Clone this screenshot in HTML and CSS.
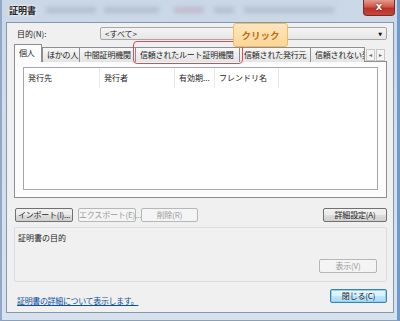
FILE: index.html
```html
<!DOCTYPE html>
<html lang="ja">
<head>
<meta charset="utf-8">
<link rel="stylesheet" href="styles.css">
</head>
<body>
<div class="win">
  <div class="titlebar">
    <span class="title">証明書</span>
    <div class="blur" aria-hidden="true">
      <span class="b1"></span><span class="b2"></span><span class="b3"></span><span class="b4"></span><span class="b5"></span>
    </div>
    <div class="close">x</div>
  </div>
  <div class="client">
    <div class="row-purpose">
      <span class="lbl">目的(N):</span>
      <div class="combo"><span>&lt;すべて&gt;</span><span class="arrow">▼</span></div>
    </div>
    <div class="tabs">
      <div class="tab sel t1">個人</div>
      <div class="tab t2">ほかの人</div>
      <div class="tab t3">中間証明機関</div>
      <div class="tab t4">信頼されたルート証明機関</div>
      <div class="tab t5">信頼された発行元</div>
      <div class="tab t6">信頼されない発</div>
      <div class="tabscroll"><span>◂</span><span>▸</span></div>
    </div>
    <div class="panel">
      <div class="list">
        <div class="lhead">
          <div class="col c1">発行先</div>
          <div class="col c2">発行者</div>
          <div class="col c3">有効期...</div>
          <div class="col c4">フレンドリ名</div>
        </div>
      </div>
    </div>
    <div class="btnrow">
      <button class="btn w58">インポート(I)...</button>
      <button class="btn w58 dis">エクスポート(E)...</button>
      <button class="btn w57 dis">削除(R)</button>
      <span class="spacer"></span>
      <button class="btn w64">詳細設定(A)</button>
    </div>
    <div class="group">
      <div class="glabel">証明書の目的</div>
      <div class="gfoot"><button class="btn w58 dis">表示(V)</button></div>
    </div>
    <div class="bottom">
      <a class="link" href="#">証明書の詳細について表示します。</a>
      <button class="btn w57 def">閉じる(C)</button>
    </div>
    <div class="hilite"></div>
    <div class="tip">クリック</div>
  </div>
</div>
</body>
</html>
```
FILE: styles.css
```css
* { box-sizing: border-box; }
html, body { margin: 0; padding: 0; }
body {
  width: 400px; height: 321px; overflow: hidden;
  font-family: "Noto Sans CJK JP", "Noto Sans", sans-serif;
  font-size: 8px; color: #1b1b1b;
}
.win {
  width: 400px; height: 321px;
  display: flex; flex-direction: column;
  padding: 0 3px 7px 4px;
  background: linear-gradient(180deg, #c9d7e6 0%, #d3dee9 40%, #d8e2ec 100%);
  border-left: 2px solid #8ea9cc;
  border-right: 3px solid #6f9ad0;
  border-bottom: 1px solid #8a9fb8;
}
.titlebar {
  height: 22px; position: relative;
  display: flex; align-items: center;
}
.title {
  font-size: 9px; font-weight: bold; color: #222;
  padding-left: 3px; margin-top: -2px;
  text-shadow: 0 0 3px #fff, 0 0 2px #fff;
}
.blur { position: absolute; left: 40px; top: 4px; width: 290px; height: 12px; filter: blur(2px); }
.blur span { position: absolute; top: 3px; height: 6px; background: #9aa6b4; opacity: .45; }
.b1 { left: 0; width: 50px; }
.b2 { left: 58px; width: 55px; }
.b3 { left: 128px; width: 30px; background: #b06080 !important; opacity: .25 !important; }
.b4 { left: 168px; width: 20px; }
.b5 { left: 198px; width: 90px; }
.close {
  position: absolute; right: -1px; top: 0; width: 32px; height: 16px;
  background: linear-gradient(180deg, #e49a8e 0%, #cd5a4a 45%, #b8322a 55%, #c6463a 100%);
  border: 1px solid #7d2a24; border-top: none;
  border-radius: 0 0 4px 4px;
  color: #fff; font-family: "DejaVu Sans", sans-serif; font-weight: bold;
  font-size: 10px; line-height: 13px; text-align: center;
  text-shadow: 0 0 2px #600;
}
.client {
  flex: 1; position: relative;
  background: #f0f0f0;
  border: 1px solid #8497b0;
  padding: 4px 6px 0 7px;
  display: flex; flex-direction: column;
}
.row-purpose { display: flex; align-items: center; height: 13px; }
.lbl { width: 86px; padding-left: 3px; }
.combo {
  flex: 1; height: 13px; display: flex; align-items: center; justify-content: space-between;
  border: 1px solid #a7a7a7; border-radius: 2px;
  background: linear-gradient(180deg, #f4f4f4, #e6e6e6);
  padding: 0 4px 0 4px;
}
.arrow { font-size: 5px; color: #111; font-family: "DejaVu Sans", sans-serif; }
.tabs { display: flex; align-items: flex-end; height: 18px; margin-top: 4px; padding-left: 1px; position: relative; z-index: 1; }
.tab {
  height: 15px; border: 1px solid #8c8e94; border-bottom: none; margin-right: -1px;
  background: linear-gradient(180deg, #f7f7f7, #e4e4e4);
  padding: 0 4px; line-height: 13px; white-space: nowrap; overflow: hidden;
  letter-spacing: -0.2px;
}
.tab.sel { height: 18px; background: #fcfcfc; margin-left: -1px; margin-right: 0; line-height: 15px; }
.t1 { width: 28px; }
.t2 { width: 38px; }
.t3 { width: 57px; }
.t4 { width: 105px; }
.t5 { width: 72px; }
.t6 { width: 55px; padding-right: 0; }
.tabscroll { display: flex; height: 15px; align-items: center; gap: 1px; padding-left: 2px; }
.tabscroll span {
  width: 9px; height: 12px; border: 1px solid #c8c8c8; background: #f4f4f4;
  font-size: 6px; line-height: 10px; text-align: center; color: #666; font-family: "DejaVu Sans", sans-serif;
}
.panel {
  height: 137px; border: 1px solid #8c8e94; margin-top: -1px;
  background: #fcfcfc; padding: 5px 8px 7px 8px;
}
.list { height: 100%; background: #fff; border: 1px solid #a3a7ae; }
.lhead { display: flex; height: 20px; align-items: center; }
.col { padding-left: 4px; height: 20px; line-height: 20px; border-right: 1px solid #e6e8eb; white-space: nowrap; overflow: hidden; }
.c1 { width: 76px; }
.c2 { width: 75px; }
.c3 { width: 40px; }
.c4 { width: 64px; }
.btnrow { display: flex; margin-top: 10px; gap: 5px; padding-left: 1px; }
.spacer { flex: 1; }
.btn {
  font: inherit; color: #1b1b1b; height: 14px; padding: 0; line-height: 12px;
  border: 1px solid #707070; border-radius: 2px;
  background: linear-gradient(180deg, #f2f2f2 0%, #ebebeb 50%, #dddddd 51%, #cfcfcf 100%);
  white-space: nowrap; letter-spacing: -0.2px;
}
.btn.dis { border-color: #b4b8bb; background: #f4f4f4; color: #9a9a9a; }
.btn.def { border-color: #3c7fb1; background: linear-gradient(180deg, #eaf6fd 0%, #d9f0fc 50%, #bee6fd 51%, #a7d9f5 100%); box-shadow: inset 0 0 0 1px #8fd3f7; }
.w58 { width: 58px; }
.w57 { width: 57px; }
.w64 { width: 64px; }
.group {
  margin-top: 5px; height: 55px; border: 1px solid #d8dde2; border-radius: 2px;
  display: flex; flex-direction: column; justify-content: space-between;
  padding: 4px 9px 8px 3px;
}
.gfoot { display: flex; justify-content: flex-end; }
.bottom { display: flex; align-items: center; justify-content: space-between; margin-top: 3px; padding-left: 3px; }
.link { color: #0b4ea2; text-decoration: underline; letter-spacing: -0.35px; margin-top: 10px; }
.hilite {
  position: absolute; left: 126px; top: 18px; width: 110px; height: 23px;
  border: 1.5px solid #d84a55; border-radius: 4px; z-index: 2;
}
.tip {
  position: absolute; left: 226px; top: 0; width: 55px; height: 24px;
  background: linear-gradient(180deg, #fde7bd 0%, #fcd696 100%);
  border: 1px solid #f1bd5c; border-radius: 3px;
  color: #c26a12; font-weight: bold; font-size: 9.5px;
  display: flex; align-items: center; justify-content: center; z-index: 3;
}
```
